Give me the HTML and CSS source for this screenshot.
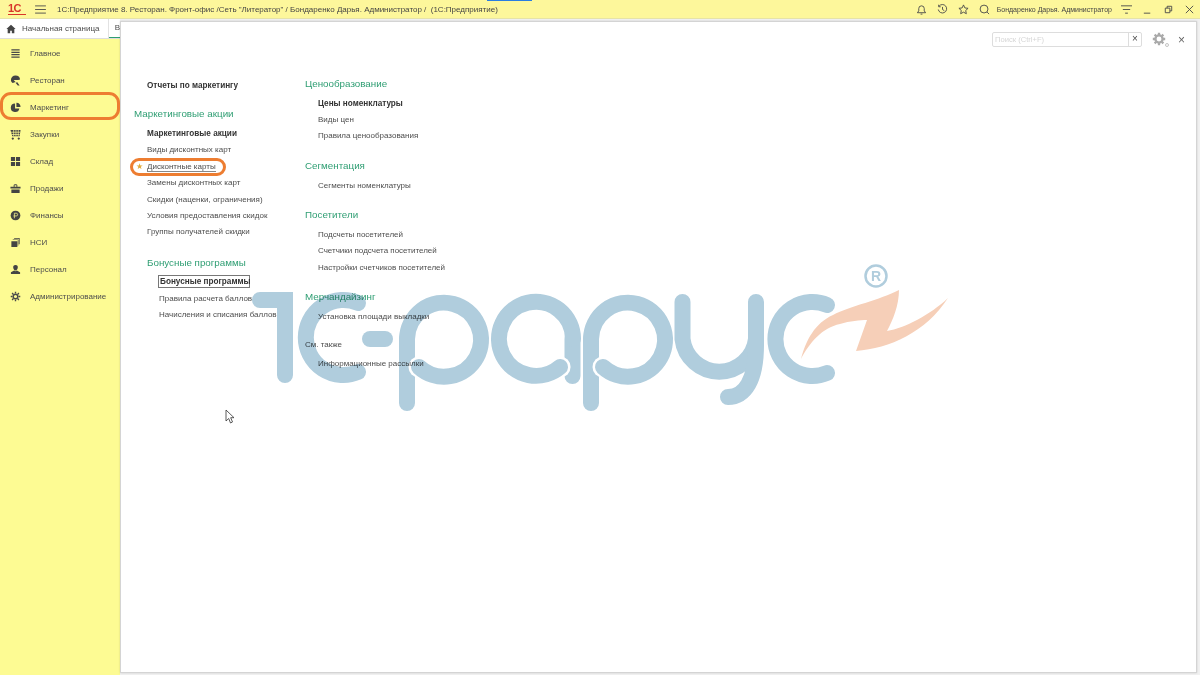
FILE: index.html
```html
<!DOCTYPE html>
<html lang="ru">
<head>
    <meta charset="UTF-8">
    <meta name="viewport" content="width=device-width, initial-scale=1.0">
    <title>1С:Предприятие 8. Ресторан. Фронт-офис</title>
    <link rel="stylesheet" href="styles.css">
</head>
<body>
    <header class="titlebar">
        <span class="progress"></span>
        <div class="brand">
            <span class="brand-mark">1С</span>
            <svg class="ico burger" viewBox="0 0 12 10"><path d="M0 1h12M0 5h12M0 9h12"/></svg>
        </div>
        <div class="window-title">1С:Предприятие 8. Ресторан. Фронт-офис /Сеть "Литератор" / Бондаренко Дарья. Администратор /&nbsp; (1С:Предприятие)</div>
        <div class="title-tools">
            <svg class="ico tool" viewBox="0 0 12 12"><path d="M1.5 9.5h9L9 7.5V5a3 3 0 0 0-6 0v2.5zM5 11h2"/></svg>
            <svg class="ico tool" viewBox="0 0 12 12"><path d="M2.2 2.5A4.6 4.6 0 1 1 1.4 6M1.8 .8v2.2H4M6 3.2V6l2 1.3"/></svg>
            <svg class="ico tool" viewBox="0 0 12 12"><path d="M6 1l1.500 3.300 3.500.4-2.600 2.400.7 3.500L6 8.900l-3.100 1.700.7-3.500L1 4.700l3.500-.4z"/></svg>
            <svg class="ico tool" viewBox="0 0 12 12"><circle cx="5.5" cy="5.5" r="4.3"/><path d="M8.800 8.800l2.200 2.200"/></svg>
            <span class="user-name">Бондаренко Дарья. Администратор</span>
            <svg class="ico tool menu-ico" viewBox="0 0 12 10"><path d="M0 1h12M2 5h8M4.5 9h3"/></svg>
            <svg class="ico tool win-min" viewBox="0 0 12 12"><path d="M2 10h7"/></svg>
            <svg class="ico tool" viewBox="0 0 12 12"><path d="M2.5 4.5h5v5h-5zM4.5 4.5v-2h5v5h-2"/></svg>
            <svg class="ico tool" viewBox="0 0 12 12"><path d="M2 2l8 8M10 2l-8 8"/></svg>
        </div>
    </header>

    <div class="workspace">
        <div class="left-col">
            <div class="tabs">
                <div class="tab-home">
                    <svg class="home-ico" viewBox="0 0 12 12"><path d="M6 1L.5 6H2v5h3V8h2v3h3V6h1.500z"/></svg>
                    <span>Начальная страница</span>
                </div>
                <div class="tab-open">В</div>
            </div>
            <nav class="sidebar">
                <a class="side-item">
                    <svg class="ico side-ico thick" viewBox="0 0 12 12"><path d="M1.5 2h9M1.5 4.700h9M1.500 7.300h9M1.500 10h9"/></svg>
                    Главное
                </a>
                <a class="side-item">
                    <svg class="side-ico solid" viewBox="0 0 12 12"><path d="M6 .5a5 5 0 0 0-5 5c0 1.500.8 2.600 2 3.300L6 7.500 4 5.500h5l2-.5A5 5 0 0 0 6 .5zM6 8.500l2.500 3h2L8 8z"/></svg>
                    Ресторан
                </a>
                <a class="side-item marked">
                    <svg class="side-ico solid" viewBox="0 0 12 12"><path d="M5.500 1.500a4.700 4.700 0 1 0 4.700 5.500H5.500zM7 .8V5.500h4.500A4.800 4.800 0 0 0 7 .8z"/></svg>
                    Маркетинг
                </a>
                <a class="side-item">
                    <svg class="side-ico solid" viewBox="0 0 12 12"><path d="M.5 1h11L10.500 8h-8zM3 9.200a1.200 1.200 0 1 0 .1 0zM9.500 9.200a1.200 1.200 0 1 0 .1 0z"/><path class="cut" d="M4 1v7M6.500 1v7M9 1v7M1 3.500h10M1.500 6h9"/></svg>
                    Закупки
                </a>
                <a class="side-item">
                    <svg class="side-ico solid" viewBox="0 0 12 12"><path d="M1 1h4.500v4.500H1zM6.500 1H11v4.500H6.500zM1 6.500h4.500V11H1zM6.500 6.500H11V11H6.500z"/></svg>
                    Склад
                </a>
                <a class="side-item">
                    <svg class="side-ico solid" viewBox="0 0 12 12"><path d="M4 4V2.500C4 1 8 1 8 2.500V4H7V2.500H5V4zM.5 4h11v2H.5zM1.500 7h9v4h-9z"/></svg>
                    Продажи
                </a>
                <a class="side-item">
                    <svg class="side-ico solid" viewBox="0 0 12 12"><circle cx="6" cy="6" r="5.3"/><path class="cut" d="M4.800 9V3.500h2a1.500 1.500 0 0 1 0 3H3.800"/></svg>
                    Финансы
                </a>
                <a class="side-item">
                    <svg class="side-ico solid" viewBox="0 0 12 12"><path d="M1.500 4.500h6.500V11H1.500zM3 3h6v6.500h-.5V2.500H3zM4.500 1H10.500v7H9.500V1.800H4.500z"/></svg>
                    НСИ
                </a>
                <a class="side-item">
                    <svg class="side-ico solid" viewBox="0 0 12 12"><path d="M6 1a2.500 2.500 0 0 0-2.500 2.800C3.500 5.500 4.700 7 6 7s2.500-1.500 2.500-3.200A2.500 2.500 0 0 0 6 1zM4.500 7L1 9v2h10V9L7.500 7 6 8z"/></svg>
                    Персонал
                </a>
                <a class="side-item">
                    <svg class="ico side-ico gear" viewBox="0 0 12 12"><circle cx="6" cy="6" r="2.5"/><path d="M6 .8v2M6 9.200v2M.8 6h2M9.200 6h2M2.300 2.300l1.400 1.400M8.300 8.300l1.400 1.400M2.300 9.700l1.400-1.400M8.300 3.700l1.400-1.400"/></svg>
                    Администрирование
                </a>
            </nav>
        </div>

        <main class="panel">
            <div class="panel-tools">
                <div class="search">
                    <span class="search-input">Поиск (Ctrl+F)</span>
                    <span class="search-clear">×</span>
                </div>
                <svg class="panel-gear" viewBox="0 0 18 16">
                    <circle cx="7" cy="7" r="3.6"/>
                    <path d="M7 .8v2.400M7 10.800v2.400M.8 7h2.400M10.800 7h2.400M2.600 2.600l1.700 1.700M9.700 9.700l1.700 1.700M2.600 11.400l1.700-1.700M9.700 4.300l1.700-1.700"/>
                    <circle class="thin" cx="15" cy="13" r="1.5"/>
                </svg>
                <span class="panel-close">×</span>
            </div>
            <div class="columns">
                <div class="col col-left">
                    <a class="link strong top-link">Отчеты по маркетингу</a>
                    <h2 class="group">Маркетинговые акции</h2>
                    <a class="link strong">Маркетинговые акции</a>
                    <a class="link">Виды дисконтных карт</a>
                    <a class="link fav"><span class="star">★</span><span class="underlined">Дисконтные карты</span></a>
                    <a class="link">Замены дисконтных карт</a>
                    <a class="link">Скидки (наценки, ограничения)</a>
                    <a class="link">Условия предоставления скидок</a>
                    <a class="link">Группы получателей скидки</a>
                    <div class="nested">
                        <h2 class="group">Бонусные программы</h2>
                        <div class="nested-links">
                            <a class="link strong focused">Бонусные программы</a>
                            <a class="link">Правила расчета баллов</a>
                            <a class="link">Начисления и списания баллов</a>
                        </div>
                    </div>
                </div>
                <div class="col col-right">
                    <h2 class="group first">Ценообразование</h2>
                    <a class="link strong">Цены номенклатуры</a>
                    <a class="link">Виды цен</a>
                    <a class="link">Правила ценообразования</a>
                    <h2 class="group">Сегментация</h2>
                    <a class="link">Сегменты номенклатуры</a>
                    <h2 class="group">Посетители</h2>
                    <a class="link">Подсчеты посетителей</a>
                    <a class="link">Счетчики подсчета посетителей</a>
                    <a class="link">Настройки счетчиков посетителей</a>
                    <h2 class="group">Мерчандайзинг</h2>
                    <a class="link">Установка площади выкладки</a>
                    <h3 class="see-also">См. также</h3>
                    <a class="link">Информационные рассылки</a>
                </div>
            </div>
        </main>
    </div>

    <!-- watermark lies over the whole page -->
    <svg class="watermark" viewBox="0 0 1200 675">
        <g class="wm-blue">
            <path class="wm-one" d="M260 300H285V375"/>
            <path d="M358 303A37.5 37.5 0 1 0 358 372"/>
            <path d="M370 339H385"/>
            <path d="M407 339V403"/>
            <path class="wm-gap" d="M419 367h.1"/>
            <path d="M407 339A37 37 0 1 1 419 367"/>
            <path d="M572.5 339V376"/>
            <path class="wm-gap" d="M560 367h.1"/>
            <path d="M573 339A37 37 0 1 0 560 367"/>
            <path d="M591 339V403"/>
            <path class="wm-gap" d="M603 367h.1"/>
            <path d="M591 339A37 37 0 1 1 603 367"/>
            <path d="M682.5 302V339A37 37 0 0 0 756 339"/>
            <path d="M756 302V345C756 380 745 397 728 397"/>
            <path d="M827 305A37 37 0 1 0 827 373"/>
            <circle class="wm-ring" cx="876" cy="276" r="10.5"/>
        </g>
        <text class="wm-r" x="876" y="281">R</text>
        <path class="wm-swoosh" d="M899 290C880 300 850 306 833 315C815 323 806 340 801 359C810 342 822 328 840 324C850 321 860 320 867 320L856 351C890 348 925 333 948 298C930 315 905 328 887 331C893 320 899 305 899 290Z"/>
    </svg>

    <svg class="cursor" viewBox="0 0 10 15"><path d="M1 1v11l2.700-2.500L5.500 14l2-1-1.800-4.300H9z"/></svg>
</body>
</html>
```

FILE: styles.css
```css
:root {
    --yellow: #fdf79b;
    --side: #fdfb93;
    --text: #4d4d4d;
    --green: #2f9e73;
    --orange: #ed7d31;
    --logo: #b0cddd;
}

* {
    box-sizing: border-box;
}

html, body {
    height: 100%;
}

body {
    margin: 0;
    display: flex;
    flex-direction: column;
    height: 675px;
    overflow: hidden;
    font-family: 'Liberation Sans', Arial, sans-serif;
    font-size: 8px;
    color: var(--text);
    background: #f1f1f1;
}

.ico {
    fill: none;
    stroke: #4a4a4a;
    stroke-width: 1;
}

/* title bar */
.titlebar {
    position: relative;
    display: flex;
    align-items: center;
    height: 19px;
    flex: none;
    background: var(--yellow);
    border-bottom: 1px solid #e6e3a8;
}

.progress {
    position: absolute;
    left: 487px;
    top: 0;
    width: 45px;
    height: 1px;
    background: #2a7de1;
}

.brand {
    display: flex;
    align-items: center;
    width: 57px;
    padding-left: 8px;
}

.brand-mark {
    width: 18px;
    font-size: 11px;
    font-weight: bold;
    line-height: 11px;
    letter-spacing: -0.5px;
    color: #d8352a;
    border-bottom: 1px solid #d8352a;
}

.burger {
    width: 11px;
    height: 9px;
    margin-left: 9px;
}

.window-title {
    flex: 1;
    font-size: 8px;
    white-space: nowrap;
    color: #444;
}

.title-tools {
    display: flex;
    align-items: center;
    padding-right: 5px;
}

.tool {
    width: 11px;
    height: 11px;
    margin-left: 10px;
}

.user-name {
    margin-left: 7px;
    font-size: 7px;
    color: #444;
    white-space: nowrap;
}

.menu-ico {
    margin-left: 9px;
}

/* left part */
.workspace {
    display: flex;
    flex: 1;
    min-height: 0;
}

.left-col {
    display: flex;
    flex-direction: column;
    width: 120px;
    flex: none;
    overflow: hidden;
}

.tabs {
    display: flex;
    height: 20px;
    flex: none;
    background: #fff;
    border-bottom: 1px solid #ddd;
}

.tab-home {
    display: flex;
    align-items: center;
    gap: 6px;
    width: 110px;
    padding-left: 6px;
    white-space: nowrap;
    border-right: 1px solid #e2e2e2;
}

.home-ico {
    width: 10px;
    height: 10px;
    fill: #444;
}

.tab-open {
    flex: 1;
    padding: 4px 0 0 6px;
    border-bottom: 1px solid #2f9e73;
}

.sidebar {
    flex: 1;
    padding-top: 1px;
    background: var(--side);
}

.side-item {
    position: relative;
    display: flex;
    align-items: center;
    height: 27px;
    padding-left: 10px;
    white-space: nowrap;
}

.side-ico {
    width: 11px;
    height: 11px;
    margin-right: 9px;
    flex: none;
}

.solid {
    fill: #444;
}

.solid .cut {
    fill: none;
    stroke: var(--side);
    stroke-width: 0.8;
}

.thick {
    stroke-width: 1.3;
}

.gear {
    stroke-width: 1.5;
}

.marked::after {
    content: "";
    position: absolute;
    left: 0;
    right: 0;
    top: -2px;
    bottom: 1px;
    border: 3px solid var(--orange);
    border-radius: 11px;
}

/* main panel */
.panel {
    flex: 1;
    margin: 2px 3px 2px 0;
    background: #fff;
    border: 1px solid #d4d4d4;
    box-shadow: 0 0 2px rgba(0,0,0,0.15);
}

.panel-tools {
    display: flex;
    align-items: center;
    justify-content: flex-end;
    height: 15px;
    margin: 10px 11px 0 0;
}

.search {
    display: flex;
    width: 150px;
    height: 15px;
    border: 1px solid #ddd;
    border-radius: 2px;
}

.search-input {
    flex: 1;
    padding: 2px 0 0 2px;
    font-size: 7.6px;
    color: #d6d6d6;
}

.search-clear {
    width: 13px;
    font-size: 10px;
    line-height: 12px;
    text-align: center;
    border-left: 1px solid #ddd;
}

.panel-gear {
    width: 18px;
    height: 16px;
    margin-left: 10px;
    fill: none;
    stroke: #aaa;
    stroke-width: 2.3;
}

.panel-gear .thin {
    stroke-width: 0.7;
}

.panel-close {
    margin-left: 8px;
    font-size: 12px;
    color: #666;
}

.columns {
    display: flex;
    padding: 0 0 0 13px;
}

.col-left {
    width: 171px;
    padding-top: 31px;
}

.col-right {
    padding-top: 30px;
}

.link {
    display: block;
    height: 16.4px;
    line-height: 16.4px;
    padding-left: 13px;
    white-space: nowrap;
}

.strong {
    font-size: 8.2px;
    font-weight: bold;
    color: #333;
}

.top-link {
    margin-bottom: 13px;
}

.group {
    margin: 14.2px 0 4.6px;
    font-size: 9.8px;
    font-weight: normal;
    line-height: 14px;
    color: var(--green);
}

.col-left .top-link + .group {
    margin-top: 0;
}

.group.first {
    margin-top: 0;
}

.see-also {
    margin: 13px 0 4px;
    font-size: 8px;
    font-weight: normal;
    line-height: 14px;
}

.fav {
    position: relative;
}

.fav::after {
    content: "";
    position: absolute;
    left: -4px;
    top: -1px;
    width: 96px;
    height: 18px;
    box-sizing: border-box;
    border: 3px solid var(--orange);
    border-radius: 9px;
}

.star {
    position: absolute;
    left: 2px;
    font-size: 8px;
    color: #e0a93a;
}

.underlined {
    border-bottom: 1px solid #888;
}

.nested {
    padding: 1px 0 0 13px;
}

.focused {
    width: 92px;
    height: 13px;
    margin: 5px 0 3px 11px;
    padding-left: 1px;
    line-height: 11px;
    border: 1px solid #777;
}

.nested-links .link {
    padding-left: 12px;
}

.nested-links .focused {
    padding-left: 1px;
}

/* overlays */
.watermark {
    position: absolute;
    left: 0;
    top: 0;
    width: 1200px;
    height: 675px;
    mix-blend-mode: multiply;
    pointer-events: none;
}

.wm-blue path {
    fill: none;
    stroke: var(--logo);
    stroke-width: 16;
    stroke-linecap: round;
}

.wm-blue .wm-one {
    stroke-linejoin: miter;
}

.wm-blue .wm-gap {
    stroke: #fff;
    stroke-width: 21;
}

.wm-ring {
    fill: none;
    stroke: var(--logo);
    stroke-width: 2.5;
}

.wm-r {
    font-size: 14px;
    font-weight: bold;
    fill: var(--logo);
    text-anchor: middle;
}

.wm-swoosh {
    fill: #f6cfb8;
}

.cursor {
    position: absolute;
    left: 225px;
    top: 409px;
    width: 10px;
    height: 15px;
    fill: #fff;
    stroke: #333;
    stroke-width: 0.8;
}
```
